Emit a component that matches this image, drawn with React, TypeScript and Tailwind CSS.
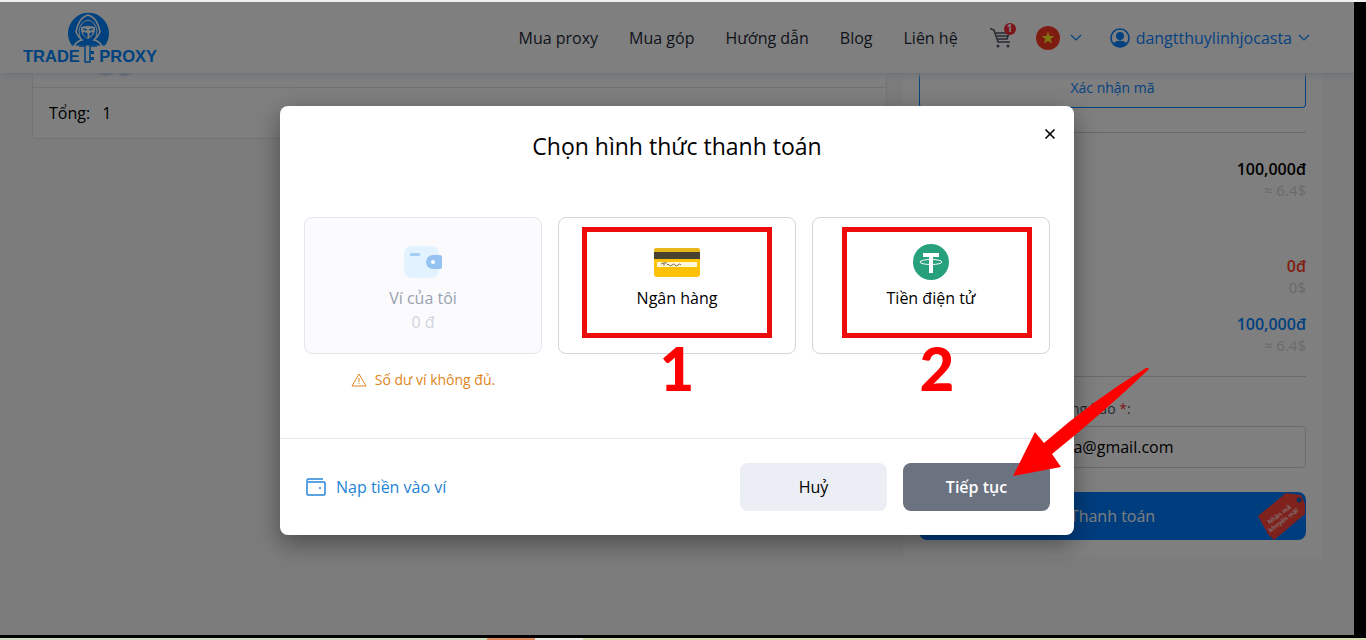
import React from "react";
import { X } from "lucide-react";

function Logo() {
  return (
    <a href="#" aria-label="Trade Proxy" className="block w-[134px]">
      <svg viewBox="0 0 134 52" className="block h-[52px] w-full" fontFamily="'Liberation Sans', Arial, sans-serif">
        <path d="M49 33.500a20.500 20.500 0 1 1 33 0Z" fill="#0084ff" />
        <path d="M51 34q3-5 8-6-4-3-6-8Q56 5 65 3q9 2 12 17-2 5-6 8 5 1 8 6" fill="none" stroke="#fff" strokeWidth="1.500" />
        <path d="M59 28q-3-3-3-9 1-9 9-11 8 2 9 11 0 6-3 9" fill="none" stroke="#fff" strokeWidth="1" />
        <path d="M58 15q7-2 14 0v3q0 5-7 9-7-4-7-9Z" fill="#fff" />
        <path d="M59 16.500l5 .5-.5 1.500q-3 .5-4.500-2Zm12 0-5 .5.500 1.500q3 .5 4.500-2Z" fill="#0084ff" />
        <path d="M60 20l4.500 1v5q-4-2-4.500-6Zm10 0-3.500 1v4q3-1.500 3.500-5Z" fill="#0084ff" />
        <path d="M56 34h6v16h5V34h7" fill="none" stroke="#0084ff" strokeWidth="1.500" />
        <path d="M67 39h4v3h-4Zm0 6h4v3h-4Z" fill="#0084ff" />
        <text x="0" y="50" fontSize="16.500" fontWeight="700" fill="#0084ff">TRADE</text>
        <text x="134" y="50" fontSize="16.500" fontWeight="700" fill="#0084ff" textAnchor="end">PROXY</text>
      </svg>
    </a>
  );
}

function Chevron() {
  return (
    <svg viewBox="0 0 12 8" className="h-2 w-3" fill="none" stroke="#0a84ff" strokeWidth="1.200">
      <path d="M1 1l5 5 5-5" />
    </svg>
  );
}

function CartIcon() {
  return (
    <svg viewBox="0 0 22 22" className="h-[22px] w-[22px]" fill="none" stroke="#4b5563" strokeWidth="1.6">
      <path d="M0 1.500l4 1.500 4 12h12M6 6h13l-2 6H8M7 9h11" />
      <circle cx="8" cy="19" r="1.500" fill="#4b5563" stroke="none" />
      <circle cx="18" cy="19" r="1.500" fill="#4b5563" stroke="none" />
    </svg>
  );
}

function Header() {
  return (
    <header className="relative flex h-[71px] items-center justify-between bg-white pr-11 pl-[23px] shadow-md shadow-slate-200">
      <Logo />
      <div className="flex items-center text-base text-gray-800">
        <nav className="flex items-center gap-[31px]">
          <a href="#">Mua proxy</a>
          <a href="#">Mua góp</a>
          <a href="#">Hướng dẫn</a>
          <a href="#">Blog</a>
          <a href="#">Liên hệ</a>
        </nav>
        <a href="#" aria-label="Giỏ hàng" className="relative ml-8">
          <CartIcon />
          <span className="absolute -top-1 left-3.5 flex h-3 w-3 items-center justify-center rounded-full bg-red-500 text-[10px] font-bold text-white">1</span>
        </a>
        <button type="button" aria-label="Tiếng Việt" className="ml-6 flex items-center gap-2.5">
          <svg viewBox="0 0 24 24" className="h-6 w-6">
            <circle cx="12" cy="12" r="12" fill="#ff3823" />
            <path d="M12 5.500l1.600 4.600h4.800l-3.900 2.900 1.500 4.600-4-2.800-4 2.800 1.500-4.600-3.900-2.900h4.800z" fill="#ffee22" />
          </svg>
          <Chevron />
        </button>
        <button type="button" className="ml-7 flex items-center gap-1.5 text-[#0a84ff]">
          <svg viewBox="0 0 20 20" className="h-5 w-5">
            <circle cx="10" cy="10" r="9" fill="none" stroke="#0a84ff" strokeWidth="1.6" />
            <circle cx="10" cy="8" r="4" fill="#0a84ff" />
            <path d="M3 15q7-5 14 0-2 4-7 4t-7-4Z" fill="#0a84ff" />
          </svg>
          dangtthuylinhjocasta
          <Chevron />
        </button>
      </div>
    </header>
  );
}

function Amount({ value, usd, tone }: { value: string; usd: string; tone: string }) {
  return (
    <div className="flex flex-col items-end">
      <span className={`text-base leading-5 font-semibold ${tone}`}>{value}</span>
      <span className="text-[15px] leading-[22px] text-gray-300">{usd}</span>
    </div>
  );
}

function Checkout() {
  return (
    <section className="w-[419px] bg-white px-4 pb-[17px]">
      <button type="button" className="flex h-[35px] w-full items-center justify-center rounded-b border border-t-0 border-[#0a84ff] pb-1 text-sm text-[#0a84ff]">
        Xác nhận mã
      </button>
      <div className="mt-6 border-y border-gray-300 pt-[26px] pb-5">
        <Amount value="100,000đ" usd="≈ 6.4$" tone="text-black" />
        <div className="mt-[55px]">
          <Amount value="0đ" usd="0$" tone="text-[#ff3b1f]" />
        </div>
        <div className="mt-4">
          <Amount value="100,000đ" usd="≈ 6.4$" tone="text-[#0084ff]" />
        </div>
      </div>
      <label htmlFor="email" className="mt-[22px] block pl-2 text-sm text-gray-600">
        Email nhận các tin thông báo <span className="text-red-500">*</span>:
      </label>
      <input id="email" type="email" defaultValue="dangtthuylinhjocasta@gmail.com" className="mt-[7px] h-[42px] w-full rounded border border-gray-300 px-1.5 text-base text-black" />
      <button type="button" className="relative mt-6 flex h-12 w-full items-center justify-center overflow-hidden rounded-lg bg-[#007bff] text-base text-white">
        Thanh toán
        <svg viewBox="0 0 50 48" className="absolute right-0 h-12 w-[50px]" fontFamily="'Open Sans', sans-serif">
          <path d="M2 24 30 1 45 3 49 12V22L18 48 12 42Z" fill="#ff4338" />
          <circle cx="43" cy="8" r="2.500" fill="#0b5fb8" />
          <g transform="rotate(-37 25 25)" fill="#fff" fillOpacity=".8" fontSize="6" fontWeight="700" textAnchor="middle">
            <text x="25" y="24">Nhận mã</text>
            <text x="25" y="31">khuyến mãi</text>
          </g>
        </svg>
      </button>
    </section>
  );
}

function Mark({ label, place }: { label: string; place: string }) {
  return (
    <span className={`pointer-events-none absolute top-[9px] h-[111px] border-[5px] border-[#ec0c0c] ${place}`}>
      <span className="absolute inset-x-0 top-full text-center font-['Lato'] text-[60px] leading-[70px] font-black text-[#ff0000]">{label}</span>
    </span>
  );
}

function PaymentDialog() {
  const card = "relative flex h-[137px] w-full flex-col items-center rounded-lg border pt-[26px] text-base leading-6";
  return (
    <div role="dialog" aria-modal="true" aria-labelledby="pay-title" className="relative w-[794px] rounded-lg bg-white shadow-[0_8px_24px_rgba(0,0,0,0.4)]">
      <button type="button" aria-label="Đóng" className="absolute top-5 right-4 text-black">
        <X size={16} strokeWidth={2.5} />
      </button>
      <h2 id="pay-title" className="pt-6 text-center text-[23px] leading-8 text-black">Chọn hình thức thanh toán</h2>
      <div className="mt-[55px] grid grid-cols-3 gap-4 px-6">
        <div>
          <button type="button" disabled className={`${card} border-gray-200 bg-[#fbfbfe] text-gray-400`}>
            <svg viewBox="0 0 40 36" className="mb-1.5 h-9 w-10">
              <rect x="1" y="2" width="35" height="32" rx="8" fill="#e2f2ff" />
              <rect x="7" y="9" width="10" height="3" rx="1" fill="#a6cdf4" />
              <path d="M30 11h7q2 0 2 2v10q0 2-2 2h-7a7 7 0 0 1 0-14Z" fill="#94c3f2" />
              <circle cx="30" cy="18" r="2" fill="#fff" />
            </svg>
            <span>Ví của tôi</span>
            <span className="text-gray-300">0 đ</span>
          </button>
          <p className="mt-4 flex items-center justify-center gap-2 text-sm font-medium text-[#df8420]">
            <svg viewBox="0 0 16 16" className="h-4 w-4" fill="none" stroke="#df8420" strokeLinejoin="round">
              <path d="M8 2 15 14H1Z" />
              <path d="M8 6v4m0 1v1" />
            </svg>
            Số dư ví không đủ.
          </p>
        </div>
        <div>
          <button type="button" className={`${card} border-gray-300 text-black`}>
            <svg viewBox="0 0 46 36" className="mb-1.5 h-9 w-[46px]">
              <rect x="0" y="4" width="46" height="29" rx="3" fill="#fdc208" />
              <path d="M3 4h40a3 3 0 0 1 3 3v2H0V7a3 3 0 0 1 3-3Z" fill="#e8b51b" />
              <path d="M0 8h46v7H0Z" fill="#49422f" />
              <path d="M3 18h40v5H3Z" fill="#fff7da" />
              <path d="M7 20q3-2 6-1m-3 0v3m3-1q1-2 2 0t3 0 3 0 3 0 3 0" fill="none" stroke="#5b4b27" strokeWidth=".8" />
            </svg>
            <span>Ngân hàng</span>
            <Mark label="1" place="left-[23px] w-[190px]" />
          </button>
        </div>
        <div>
          <button type="button" className={`${card} border-gray-300 text-black`}>
            <svg viewBox="0 0 36 36" className="mb-1.5 h-9 w-9">
              <circle cx="18" cy="18" r="18" fill="#26a17b" />
              <path d="M10 9h16v4h-6v16h-4V13h-6Z" fill="#fff" />
              <ellipse cx="18" cy="18" rx="11" ry="2.500" fill="none" stroke="#fff" />
            </svg>
            <span>Tiền điện tử</span>
            <Mark label="2" place="left-[29px] w-[190px]" />
          </button>
        </div>
      </div>
      <footer className="mt-12 flex items-center justify-between border-t border-gray-200 p-6">
        <a href="#" className="flex items-center gap-2.5 pl-0.5 text-base text-[#2484d6]">
          <svg viewBox="0 0 20 18" className="h-[18px] w-5" fill="none" stroke="#2484d6" strokeWidth="1.500" strokeLinejoin="round">
            <path d="M17 1H2Q1 1 1 3V16q0 1 1 1H18q1 0 1-1V5q0-1-1-1H2" />
            <circle cx="14" cy="10" r="1" fill="#2484d6" stroke="none" />
          </svg>
          Nạp tiền vào ví
        </a>
        <div className="flex gap-4">
          <button type="button" className="h-12 w-[147px] rounded-lg bg-[#eceef6] text-base text-black">Huỷ</button>
          <button type="button" className="h-12 w-[147px] rounded-lg bg-[#6b7280] text-base font-semibold text-white">Tiếp tục</button>
        </div>
      </footer>
      <svg viewBox="0 0 136 110" className="pointer-events-none absolute -right-[75px] bottom-[58px] h-[110px] w-[136px]">
        <path d="M0 109 22 65 31 76Q80 33 133 1q4-1 2 2Q90 46 39 87l9 13Z" fill="#ff0000" />
      </svg>
    </div>
  );
}

export default function App() {
  return (
    <div className="flex min-h-screen flex-col bg-black font-['Open_Sans',sans-serif]">
      <div className="h-0.5 bg-[#f0f0f0]" />
      <div className="relative mr-3 flex flex-1 flex-col overflow-hidden bg-[#f9f9f9]">
        <Header />
        <main className="flex flex-1 items-start gap-4 px-8 pb-[76px]">
          <section className="flex-1 rounded-b border border-t-0 border-gray-200 bg-white">
            <div className="h-[15px] border-b border-gray-200 pl-16">
              <svg viewBox="0 0 40 3" className="h-[3px] w-10">
                <path d="M1 0h16q-8 5-16 0ZM22 0h14q-6 4-14 2Z" fill="#5a8fe0" />
              </svg>
            </div>
            <p className="flex h-[50px] items-center gap-3 px-4 text-base text-black">
              <span>Tổng:</span>
              <span>1</span>
            </p>
          </section>
          <Checkout />
        </main>
        <div className="absolute inset-0 flex items-center justify-center bg-black/50 pt-1">
          <PaymentDialog />
        </div>
      </div>
      <div className="mt-[3px] flex h-0.5">
        <span className="w-[487px] bg-[#cfdcc0]" />
        <span className="w-12 bg-[#dd8a5c]" />
        <span className="w-12 bg-[#eceee8]" />
        <span className="flex-1 bg-[#d3dfb0]" />
      </div>
    </div>
  );
}
